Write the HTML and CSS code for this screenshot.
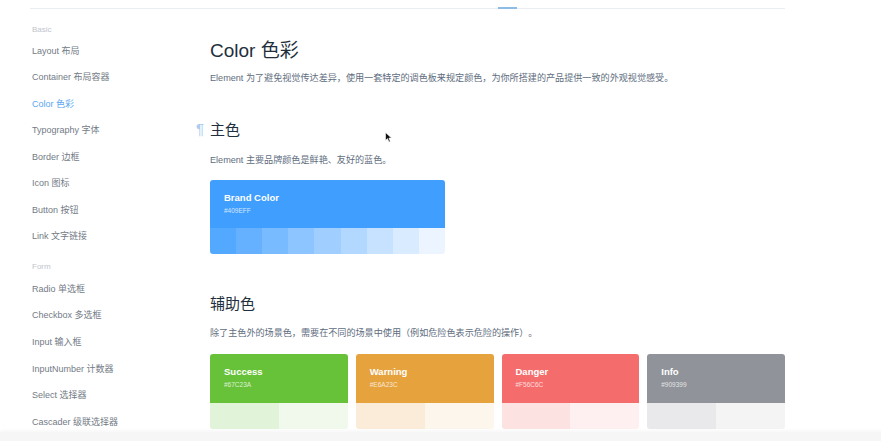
FILE: index.html
```html
<!DOCTYPE html>
<html lang="zh-CN">
<head>
<meta charset="utf-8">
<title>Color 色彩</title>
<link rel="stylesheet" href="styles.css">
</head>
<body>
<div class="topbar"><span class="tab-indicator"></span></div>
<div class="page">
  <nav class="sidebar">
    <div class="group-title">Basic</div>
    <a class="nav-item">Layout 布局</a>
    <a class="nav-item">Container 布局容器</a>
    <a class="nav-item active">Color 色彩</a>
    <a class="nav-item">Typography 字体</a>
    <a class="nav-item">Border 边框</a>
    <a class="nav-item">Icon 图标</a>
    <a class="nav-item">Button 按钮</a>
    <a class="nav-item">Link 文字链接</a>
    <div class="group-title form-title">Form</div>
    <a class="nav-item">Radio 单选框</a>
    <a class="nav-item">Checkbox 多选框</a>
    <a class="nav-item">Input 输入框</a>
    <a class="nav-item">InputNumber 计数器</a>
    <a class="nav-item">Select 选择器</a>
    <a class="nav-item">Cascader 级联选择器</a>
  </nav>
  <main class="content">
    <h1 class="title">Color 色彩</h1>
    <p class="desc">Element 为了避免视觉传达差异，使用一套特定的调色板来规定颜色，为你所搭建的产品提供一致的外观视觉感受。</p>
    <h2 class="section main-color"><span class="anchor">¶</span>主色<svg class="cursor" width="7" height="11" viewBox="0 0 7 11"><path d="M0.5 0.5 L0.5 8.5 L2.5 6.6 L4 10 L5.3 9.4 L3.9 6.1 L6.5 6 Z" fill="#111" stroke="#fff" stroke-width="0.6"/></svg></h2>
    <p class="desc desc-tight">Element 主要品牌颜色是鲜艳、友好的蓝色。</p>
    <div class="brand-card">
      <div class="card-top brand">
        <div class="card-name">Brand Color</div>
        <div class="card-hex">#409EFF</div>
      </div>
      <div class="stripes">
        <span class="b1"></span><span class="b2"></span><span class="b3"></span><span class="b4"></span><span class="b5"></span><span class="b6"></span><span class="b7"></span><span class="b8"></span><span class="b9"></span>
      </div>
    </div>
    <h2 class="section sub-color">辅助色</h2>
    <p class="desc desc-tight">除了主色外的场景色，需要在不同的场景中使用<span class="cjk-paren">（例如危险色表示危险的操作）。</span></p>
    <div class="sub-grid">
      <div class="sub-card">
        <div class="card-top success"><div class="card-name">Success</div><div class="card-hex">#67C23A</div></div>
        <div class="stripes"><span class="s1"></span><span class="s2"></span></div>
      </div>
      <div class="sub-card">
        <div class="card-top warning"><div class="card-name">Warning</div><div class="card-hex">#E6A23C</div></div>
        <div class="stripes"><span class="w1"></span><span class="w2"></span></div>
      </div>
      <div class="sub-card">
        <div class="card-top danger"><div class="card-name">Danger</div><div class="card-hex">#F56C6C</div></div>
        <div class="stripes"><span class="d1"></span><span class="d2"></span></div>
      </div>
      <div class="sub-card">
        <div class="card-top info"><div class="card-name">Info</div><div class="card-hex">#909399</div></div>
        <div class="stripes"><span class="i1"></span><span class="i2"></span></div>
      </div>
    </div>
  </main>
</div>
<div class="bottom-strip"></div>
</body>
</html>
```
FILE: styles.css
```css
* { box-sizing: border-box; }
html, body {
  margin: 0;
  padding: 0;
  background: #fff;
  overflow: hidden;
}
body {
  font-family: "Liberation Sans", "Noto Sans CJK SC", sans-serif;
  width: 881px;
  height: 441px;
}
.topbar {
  display: flex;
  margin-left: 30px;
  width: 755px;
  height: 9px;
  border-bottom: 1px solid #e9edf2;
}
.tab-indicator {
  align-self: flex-end;
  margin-left: 468px;
  width: 19px;
  height: 2px;
  background: #8bbde6;
  margin-bottom: -1px;
}
.page {
  display: flex;
}
.sidebar {
  width: 210px;
  padding-left: 32px;
  padding-top: 14px;
  display: flex;
  flex-direction: column;
}
.group-title {
  font-size: 8px;
  line-height: 14px;
  color: #c0c4cc;
  margin-bottom: 0.5px;
}
.form-title {
  margin-top: 10.5px;
  margin-bottom: 1.5px;
}
.nav-item {
  font-size: 9px;
  line-height: 26.55px;
  height: 26.55px;
  color: #737b86;
  white-space: nowrap;
}
.nav-item.active {
  color: #5aa6f0;
}
.content {
  width: 575px;
  display: flex;
  flex-direction: column;
}
.title {
  margin: 30px 0 0;
  font-size: 19px;
  line-height: 24px;
  font-weight: normal;
  color: #1f2f3d;
}
.desc {
  margin: 8px 0 0;
  font-size: 9.1px;
  line-height: 14px;
  color: #606d7e;
  white-space: nowrap;
  text-spacing-trim: space-all;
}
.cjk-paren {
  font-family: "Noto Sans CJK SC", sans-serif;
  text-spacing-trim: space-all;
}
.section {
  position: relative;
  margin: 35px 0 0;
  font-size: 15px;
  line-height: 20px;
  font-weight: normal;
  color: #1f2f3d;
}
.sub-color {
  margin-top: 40px;
}
.anchor {
  position: absolute;
  left: -14px;
  top: -1px;
  font-size: 15px;
  color: #a9cdee;
}
.cursor {
  position: absolute;
  left: 175px;
  top: 12px;
}
.desc-tight {
  margin-top: 13px;
}
.sub-color + .desc-tight {
  margin-top: 11px;
}
.brand-card {
  margin-top: 13px;
  width: 235px;
  border-radius: 3px;
  overflow: hidden;
}
.card-top {
  height: 48px;
  padding: 12px 0 0 14px;
  color: #fff;
}
.card-name {
  font-size: 9.5px;
  line-height: 12px;
  font-weight: bold;
}
.card-hex {
  margin-top: 2px;
  font-size: 6.5px;
  line-height: 10px;
  opacity: 0.75;
}
.stripes {
  display: flex;
  height: 26px;
}
.stripes span {
  flex: 1;
}
.brand { background: #409eff; }
.b1 { background: #53a8ff; }
.b2 { background: #66b1ff; }
.b3 { background: #79bbff; }
.b4 { background: #8cc5ff; }
.b5 { background: #a0cfff; }
.b6 { background: #b3d8ff; }
.b7 { background: #c6e2ff; }
.b8 { background: #d9ecff; }
.b9 { background: #ecf5ff; }
.sub-grid {
  margin-top: 14px;
  display: grid;
  grid-template-columns: repeat(4, 1fr);
  gap: 8px;
}
.sub-card {
  border-radius: 3px;
  overflow: hidden;
}
.sub-card .card-top {
  height: 49px;
}
.success { background: #67c23a; }
.warning { background: #e6a23c; }
.danger { background: #f56c6c; }
.info { background: #909399; }
.s1 { background: #e1f3d8; }
.s2 { background: #f0f9eb; }
.w1 { background: #faecd8; }
.w2 { background: #fdf6ec; }
.d1 { background: #fde2e2; }
.d2 { background: #fef0f0; }
.i1 { background: #e9e9eb; }
.i2 { background: #f4f4f5; }
.bottom-strip {
  position: fixed;
  left: 0;
  right: 0;
  bottom: 0;
  height: 9px;
  background: #f6f6f6;
  box-shadow: 0 -2px 3px rgba(0, 0, 0, 0.03);
}
```
